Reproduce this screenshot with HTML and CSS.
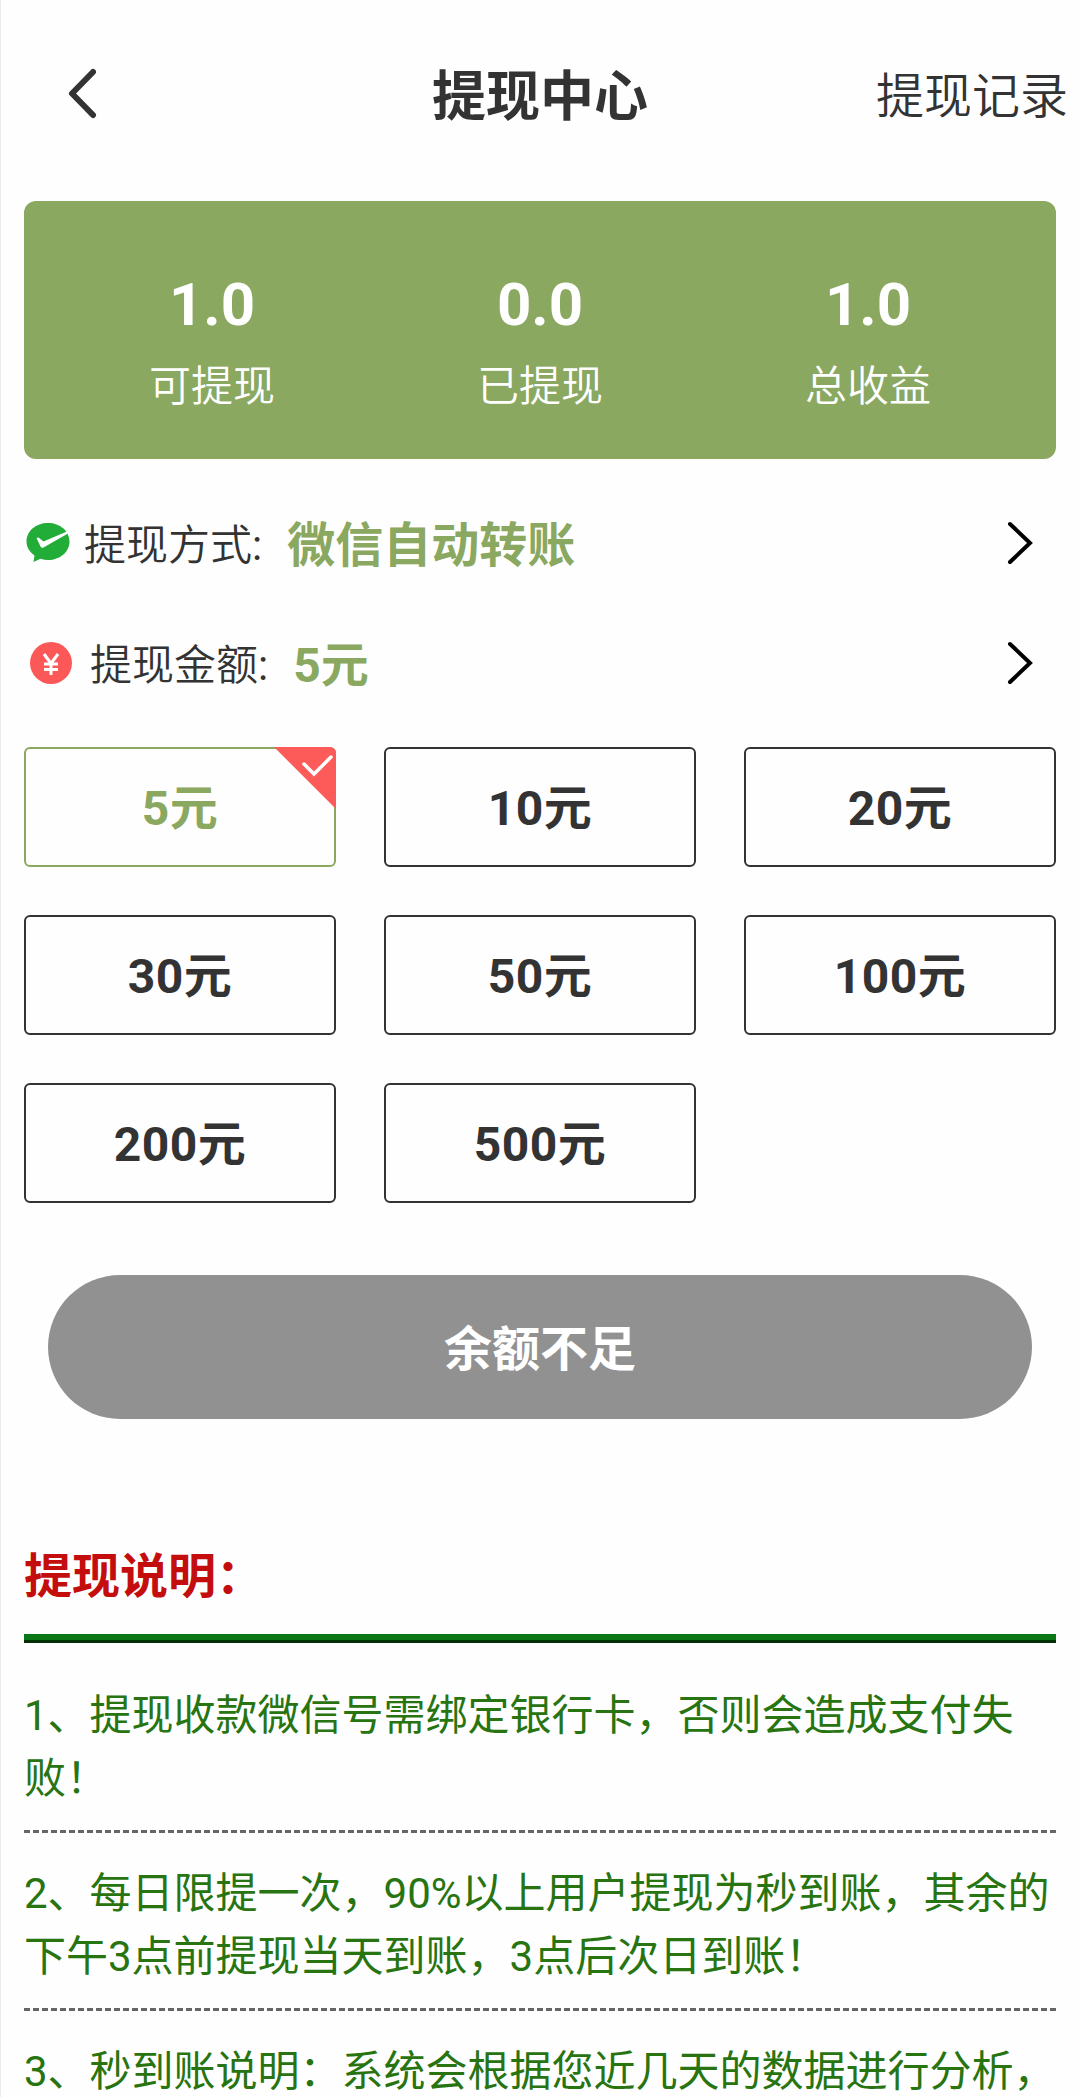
FILE: index.html
```html
<!DOCTYPE html>
<html lang="zh-CN">
<head>
    <meta charset="UTF-8">
    <meta name="viewport" content="width=device-width, initial-scale=1.0">
    <title>提现中心</title>
    <link rel="stylesheet" href="styles.css">
</head>
<body>
    <div class="header">
        <a class="back" aria-label="返回">
            <svg width="30" height="52" viewBox="0 0 30 52">
                <path d="M25 4L4 25.500L25 47" fill="none" stroke="#333" stroke-width="6" stroke-linecap="round" stroke-linejoin="round"/>
            </svg>
        </a>
        <h1>提现中心</h1>
        <a class="record">提现记录</a>
    </div>

    <div class="card">
        <div class="stat">
            <div class="num">1.0</div>
            <div class="label">可提现</div>
        </div>
        <div class="stat">
            <div class="num">0.0</div>
            <div class="label">已提现</div>
        </div>
        <div class="stat">
            <div class="num">1.0</div>
            <div class="label">总收益</div>
        </div>
    </div>

    <div class="row">
        <svg class="icon-wechat" width="46" height="42" viewBox="0 0 46 42">
            <path d="M23 1C11 1 1.500 9 1.500 19.500C1.500 25 4.500 30 9.500 33.500L8.500 40L15.500 36.800C18 37.600 20.500 38 23 38C35 38 44.500 30 44.500 19.500C44.500 9 35 1 23 1Z" fill="#22ac38"/>
            <path d="M11.500 16L13.500 15.500L18.500 19.500L43 9V11.500L18.500 25.500Q16.500 26.500 15.500 24.500Z" fill="#fff"/>
        </svg>
        <span class="name">提现方式<span class="colon">:</span></span>
        <span class="value">微信自动转账</span>
        <svg class="arrow" width="26" height="44" viewBox="0 0 26 44">
            <path d="M3 3L23 22L3 41" fill="none" stroke="#000" stroke-width="4" stroke-linecap="round"/>
        </svg>
    </div>
    <div class="row">
        <svg class="icon-money" width="42" height="42" viewBox="0 0 42 42">
            <circle cx="21" cy="21" r="21" fill="#fc5858"/>
            <path d="M14 12L21 21.500L28 12M21 21.500V33M14 22H28M14 27.500H28" fill="none" stroke="#fff" stroke-width="3"/>
        </svg>
        <span class="name">提现金额<span class="colon">:</span></span>
        <span class="value">5元</span>
        <svg class="arrow" width="26" height="44" viewBox="0 0 26 44">
            <path d="M3 3L23 22L3 41" fill="none" stroke="#000" stroke-width="4" stroke-linecap="round"/>
        </svg>
    </div>

    <div class="amounts">
        <div class="amount active">5元
            <svg class="check" width="62" height="62" viewBox="0 0 62 62">
                <path d="M0 0H62V62Z" fill="#fd5a5a"/>
                <path d="M30 17L40 27L57 10" fill="none" stroke="#fff" stroke-width="3.500" stroke-linecap="round"/>
            </svg>
        </div>
        <div class="amount">10元</div>
        <div class="amount">20元</div>
        <div class="amount">30元</div>
        <div class="amount">50元</div>
        <div class="amount">100元</div>
        <div class="amount">200元</div>
        <div class="amount">500元</div>
    </div>

    <button class="submit" disabled>余额不足</button>

    <div class="notice">
        <h2>提现说明：</h2>
        <p>1、提现收款微信号需绑定银行卡，否则会造成支付失败！</p>
        <p>2、每日限提一次，90%以上用户提现为秒到账，其余的下午3点前提现当天到账，3点后次日到账！</p>
        <p>3、秒到账说明：系统会根据您近几天的数据进行分析，</p>
    </div>
</body>
</html>
```
FILE: styles.css
```css
* {
    box-sizing: border-box;
}
body {
    margin: 0;
    padding: 0 24px;
    height: 2097px;
    overflow: hidden;
    background: #fefefe;
    /* thin edge on the left side of the screen */
    box-shadow: inset 1px 0 #ececec;
    color: #333;
    font-family: Roboto, "Noto Sans CJK SC", sans-serif;
    font-size: 42px;
}
h1, h2, p {
    margin: 0;
}
.header {
    display: grid;
    grid-template-columns: 1fr auto 1fr;
    align-items: center;
    height: 201px;
    margin-right: -12px;
    margin-left: -12px;
    padding-bottom: 14px;
}
.back {
    display: flex;
    padding-left: 56px;
}
.header h1 {
    padding-top: 8px;
    font-size: 54px;
    line-height: 72px;
}
.record {
    padding-bottom: 4px;
    font-size: 48px;
    font-weight: 350;
    text-align: right;
}
.card {
    display: flex;
    height: 258px;
    padding: 67px 24px 0;
    background: #8aa860;
    border-radius: 12px;
    color: #fff;
    text-align: center;
}
.stat {
    flex: 1;
}
.num {
    font-size: 60px;
    font-weight: bold;
    line-height: 74px;
}
.label {
    margin-top: 14px;
    font-weight: 350;
    line-height: 62px;
}
.row {
    display: flex;
    align-items: center;
    height: 120px;
}
.card + .row {
    margin-top: 24px;
}
.icon-wechat {
    margin: 0 13px 0 1px;
}
.icon-money {
    margin: 0 18px 0 6px;
}
.name {
    padding-bottom: 4px;
    font-weight: 350;
}
.colon {
    font-weight: 400;
}
.value {
    margin-left: 25px;
    padding-bottom: 4px;
    color: #8aa860;
    font-size: 48px;
    font-weight: bold;
}
.arrow {
    margin: 0 23px 0 auto;
}
.amounts {
    display: grid;
    grid-template-columns: repeat(3, 1fr);
    gap: 48px;
    margin-top: 24px;
}
.amount {
    position: relative;
    height: 120px;
    border: 2px solid #333;
    border-radius: 6px;
    font-size: 48px;
    font-weight: bold;
    letter-spacing: 0.5px;
    line-height: 120px;
    text-align: center;
}
.amount.active {
    border-color: #8aa860;
    color: #8aa860;
}
.check {
    position: absolute;
    top: -2px;
    right: -2px;
    border-top-right-radius: 6px;
}
.submit {
    display: block;
    width: 984px;
    height: 144px;
    margin: 72px auto 0;
    padding: 0 0 5px;
    border: none;
    border-radius: 72px;
    background: #919191;
    color: #fff;
    font: inherit;
    font-size: 48px;
    font-weight: bold;
}
.notice {
    margin-top: 120px;
    color: #277410;
}
.notice h2 {
    height: 104px;
    border-bottom: 3px solid #052f05;
    box-shadow: inset 0 -6px #0a7816;
    color: #c40d0d;
    font-size: 48px;
    line-height: 76px;
}
.notice p {
    padding: 29px 0 23px;
    line-height: 63px;
    /* dashed divider */
    background: repeating-linear-gradient(90deg, #666 0 6px, transparent 6px 9px) bottom / 100% 3px no-repeat;
}
.notice h2 + p {
    padding-top: 41px;
}
```
